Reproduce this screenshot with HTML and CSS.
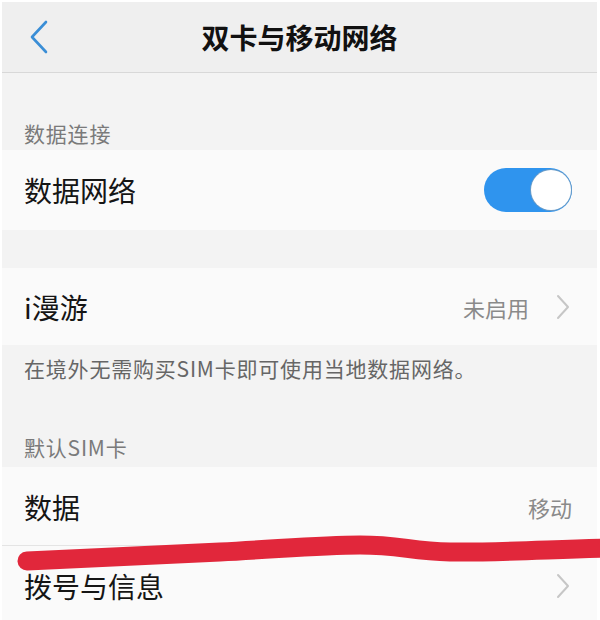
FILE: index.html
```html
<!DOCTYPE html>
<html lang="zh-CN">
<head>
    <meta charset="UTF-8">
    <title>双卡与移动网络</title>
    <link rel="stylesheet" href="styles.css">
</head>
<body>
    <div class="page">
        <div class="screen">
            <div class="header">
                <svg class="back" width="20" height="34" viewBox="0 0 20 34">
                    <path d="M17 2 L3 17 L17 32" />
                </svg>
                <div class="title">双卡与移动网络</div>
            </div>

            <div class="caption caption-first">数据连接</div>
            <div class="row row-tall">
                <span class="row-name">数据网络</span>
                <span class="switch on"><span class="knob"></span></span>
            </div>

            <div class="spacer"></div>

            <div class="row row-short">
                <span class="row-name">i漫游</span>
                <span class="row-side">
                    <span class="row-value">未启用</span>
                    <svg class="arrow" width="14" height="26" viewBox="0 0 14 26">
                        <path d="M2 2 L12 13 L2 24" />
                    </svg>
                </span>
            </div>
            <div class="note">在境外无需购买SIM卡即可使用当地数据网络。</div>

            <div class="caption caption-sim">默认SIM卡</div>
            <div class="row row-line">
                <span class="row-name">数据</span>
                <span class="row-value">移动</span>
            </div>
            <div class="row">
                <span class="row-name">拨号与信息</span>
                <svg class="arrow" width="14" height="26" viewBox="0 0 14 26">
                    <path d="M2 2 L12 13 L2 24" />
                </svg>
            </div>
        </div>

        <!-- 手绘的红色标注 -->
        <svg class="mark" width="600" height="620" viewBox="0 0 600 620">
            <path d="M27 561 C 100 558, 160 555, 220 552 S 320 545, 360 545 S 410 551, 450 552 S 560 549, 615 548" />
        </svg>
    </div>
</body>
</html>
```

FILE: styles.css
```css
body{
    margin: 0;
    background: #fff;
}
.page{
    position: relative;
    width: 600px;
    height: 620px;
    overflow: hidden;
    font-family: "Noto Sans CJK SC", "Noto Sans", sans-serif;
}
.screen{
    margin: 2px 3px 0 2px;
    height: 618px;
    background: #f3f3f3;
}

.header{
    height: 70px;
    background: #efefef;
    border-bottom: 1px solid #d8d8d8;
    display: flex;
    align-items: center;
    justify-content: center;
    position: relative;
}
.back{
    position: absolute;
    left: 27px;
    top: 18px;
}
.back path{
    fill: none;
    stroke: #3a8ed6;
    stroke-width: 2.6;
    stroke-linecap: round;
    stroke-linejoin: round;
}
.title{
    font-size: 28px;
    font-weight: 700;
    color: #111;
    line-height: 1;
}

.caption{
    padding: 0 22px;
    line-height: 30px;
    font-size: 21px;
    letter-spacing: 0.8px;
    color: #7a7a7a;
}
.caption-first{
    padding-top: 45px;
    padding-bottom: 2px;
}
.caption-sim{
    padding-top: 49px;
    padding-bottom: 5px;
}

.row{
    height: 80px;
    background: #fafafa;
    display: flex;
    align-items: center;
    justify-content: space-between;
    padding: 0 27px 0 22px;
}
.row-tall{
    padding-right: 25px;
}
.row-short{
    height: 77px;
}
.row-line{
    height: 79px;
    padding-right: 25px;
    box-shadow: inset 0 -1px 0 #e4e4e4;
}
.row-name{
    font-size: 28px;
    color: #151515;
}
.row-side{
    display: flex;
    align-items: center;
    gap: 27px;
}
.row-value{
    font-size: 22px;
    color: #8a8a8a;
}
.arrow path{
    fill: none;
    stroke: #c6c6c6;
    stroke-width: 2;
    stroke-linecap: round;
    stroke-linejoin: round;
}

.spacer{
    height: 38px;
}
.note{
    padding: 8px 22px 0;
    line-height: 30px;
    font-size: 21px;
    letter-spacing: 0.8px;
    color: #666;
}

.switch{
    width: 88px;
    height: 44px;
    border-radius: 22px;
    background: #2f94ee;
    display: flex;
    align-items: center;
    justify-content: flex-end;
    padding: 0 1px;
    box-sizing: border-box;
}
.knob{
    width: 40px;
    height: 40px;
    border-radius: 50%;
    background: #fff;
    box-shadow: 0 0 0 1px #6a9cc8;
}

.mark{
    position: absolute;
    left: 0;
    top: 0;
    pointer-events: none;
}
.mark path{
    fill: none;
    stroke: #e1273b;
    stroke-width: 19;
    stroke-linecap: round;
}
```
